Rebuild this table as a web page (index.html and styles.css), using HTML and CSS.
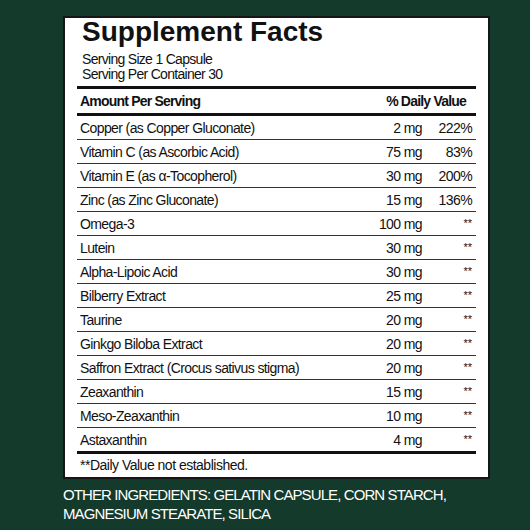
FILE: index.html
```html
<!DOCTYPE html>
<html>
<head>
  <title>Supplement Facts</title>
  <link rel="stylesheet" href="styles.css">
</head>
<body>
  <div class="label">
    <h1>Supplement Facts</h1>
    <div class="serving">
      <div>Serving Size 1 Capsule</div>
      <div>Serving Per Container 30</div>
    </div>
    <div class="row head">
      <span>Amount Per Serving</span>
      <span class="dv-head">% Daily Value</span>
    </div>
    <div class="row"><span>Copper (as Copper Gluconate)</span><span class="amt">2 mg</span><span class="dv">222%</span></div>
    <div class="row"><span>Vitamin C (as Ascorbic Acid)</span><span class="amt">75 mg</span><span class="dv">83%</span></div>
    <div class="row"><span>Vitamin E (as α-Tocopherol)</span><span class="amt">30 mg</span><span class="dv">200%</span></div>
    <div class="row"><span>Zinc (as Zinc Gluconate)</span><span class="amt">15 mg</span><span class="dv">136%</span></div>
    <div class="row"><span>Omega-3</span><span class="amt">100 mg</span><span class="dv star">**</span></div>
    <div class="row"><span>Lutein</span><span class="amt">30 mg</span><span class="dv star">**</span></div>
    <div class="row"><span>Alpha-Lipoic Acid</span><span class="amt">30 mg</span><span class="dv star">**</span></div>
    <div class="row"><span>Bilberry Extract</span><span class="amt">25 mg</span><span class="dv star">**</span></div>
    <div class="row"><span>Taurine</span><span class="amt">20 mg</span><span class="dv star">**</span></div>
    <div class="row"><span>Ginkgo Biloba Extract</span><span class="amt">20 mg</span><span class="dv star">**</span></div>
    <div class="row"><span>Saffron Extract (Crocus sativus stigma)</span><span class="amt">20 mg</span><span class="dv star">**</span></div>
    <div class="row"><span>Zeaxanthin</span><span class="amt">15 mg</span><span class="dv star">**</span></div>
    <div class="row"><span>Meso-Zeaxanthin</span><span class="amt">10 mg</span><span class="dv star">**</span></div>
    <div class="row last"><span>Astaxanthin</span><span class="amt">4 mg</span><span class="dv star">**</span></div>
    <div class="note">**Daily Value not established.</div>
  </div>
  <p class="other">OTHER INGREDIENTS: GELATIN CAPSULE, CORN STARCH,<br>MAGNESIUM STEARATE, SILICA</p>
</body>
</html>
```

FILE: styles.css
```css
body {
  margin: 0;
  background-color: #133a2b;
  font-family: "Liberation Sans", Arial, sans-serif;
  color: #111;
}
.label {
  width: 427px;
  margin: 16px 0 0 63px;
  box-sizing: border-box;
  background-color: #fff;
  border: 2px solid #161616;
  padding: 0 12px 0 12px;
}
h1 {
  margin: 0 0 0 5px;
  font-size: 28px;
  line-height: 28px;
  font-weight: bold;
}
.serving {
  margin: 6px 0 0 0;
  padding-left: 5px;
  font-size: 14px;
  line-height: 15px;
  letter-spacing: -0.7px;
  padding-bottom: 4px;
  border-bottom: 3px solid #111;
}
.row {
  display: grid;
  grid-template-columns: 1fr 80px 54px;
  height: 23px;
  align-items: center;
  font-size: 14px;
  letter-spacing: -0.6px;
  padding-left: 3px;
  border-bottom: 1px solid #333;
}
.row.head {
  grid-template-columns: 1fr auto;
  height: 24px;
  font-weight: bold;
  letter-spacing: -0.8px;
  border-bottom: 3px solid #111;
}
.row.last {
  border-bottom: 3px solid #111;
}
.amt {
  text-align: right;
}
.dv {
  text-align: right;
  padding-right: 4px;
}
.dv-head {
  padding-right: 10px;
}
.star {
  font-size: 11px;
  letter-spacing: 0;
  padding-bottom: 2px;
}
.note {
  font-size: 14px;
  letter-spacing: -0.5px;
  line-height: 23px;
  padding-left: 3px;
}
.other {
  margin: 6px 0 0 63px;
  color: #fff;
  font-size: 15px;
  line-height: 19px;
  letter-spacing: -0.9px;
}
```
